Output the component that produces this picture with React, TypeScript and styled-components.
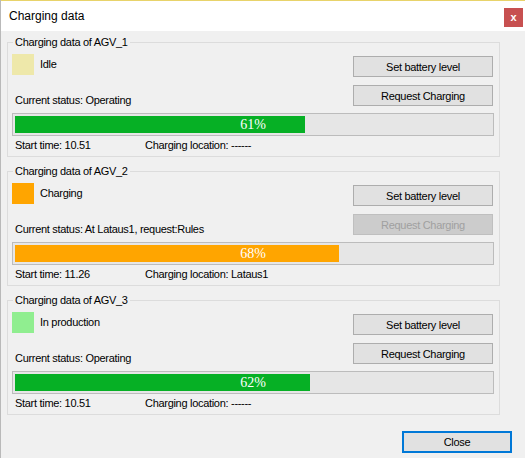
import React from "react";
import styled, { createGlobalStyle } from "styled-components";

const GlobalStyle = createGlobalStyle`
  html, body { margin: 0; padding: 0; background: #f0f0f0; }
  body { font-family: "Liberation Sans", Arial, sans-serif; }
  * { box-sizing: border-box; }
`;

const Window = styled.div`
  width: 525px;
  height: 458px;
  border-left: 1px solid #b9b9b9;
  background: #f0f0f0;
  display: flex;
  flex-direction: column;
  overflow: hidden;
`;

const TitleBar = styled.div`
  height: 31px;
  flex: none;
  border-top: 1px solid #e8d36a;
  background: #ffffff;
  display: flex;
  align-items: flex-start;
  justify-content: space-between;
  padding: 0 2px 0 8px;
`;

const Title = styled.span`
  font-size: 12px;
  line-height: 15px;
  color: #000;
  margin-top: 8px;
`;

const CloseX = styled.div`
  width: 19px;
  height: 19px;
  margin-top: 7px;
  background: #c75050;
  color: #fff;
  font: bold 11px "Liberation Sans", Arial, sans-serif;
  display: flex;
  align-items: center;
  justify-content: center;
  padding-bottom: 2px;
`;

const Body = styled.div`
  flex: 1;
  display: flex;
  flex-direction: column;
  padding: 5px 0 0 6px;
`;

const Groups = styled.div`
  display: flex;
  flex-direction: column;
  gap: 8px;
`;

const Group = styled.fieldset`
  width: 493px;
  min-width: 0;
  margin: 0;
  padding: 0 5px 4px 4px;
  border: 1px solid #dcdcdc;
  font-size: 11px;
  letter-spacing: -0.3px;
  color: #000;
`;

const Legend = styled.legend`
  padding: 0 2px;
  margin-left: 1px;
  line-height: 13px;
  font-size: 11px;
`;

const TopSection = styled.div`
  display: flex;
  justify-content: space-between;
  align-items: flex-start;
`;

const LeftCol = styled.div`
  display: flex;
  flex-direction: column;
  padding-top: 5px;
`;

const StateRow = styled.div`
  display: flex;
  align-items: center;
  gap: 6px;
  height: 21px;
`;

const Swatch = styled.div<{ $color: string }>`
  width: 22px;
  height: 21px;
  background: ${(p) => p.$color};
`;

const Text = styled.span`
  line-height: 13px;
  white-space: nowrap;
`;

const StatusText = styled(Text)`
  margin-top: 19px;
  padding-left: 3px;
`;

const RightCol = styled.div`
  display: flex;
  flex-direction: column;
  gap: 8px;
  padding-top: 7px;
  margin-right: 1px;
`;

const Button = styled.div<{ $disabled?: boolean }>`
  width: 140px;
  height: 21px;
  border: 1px solid ${(p) => (p.$disabled ? "#bfbfbf" : "#adadad")};
  background: ${(p) => (p.$disabled ? "#cccccc" : "#e1e1e1")};
  color: ${(p) => (p.$disabled ? "#a0a0a0" : "#000")};
  font-size: 11px;
  letter-spacing: -0.3px;
  display: flex;
  align-items: center;
  justify-content: center;
`;

const Bar = styled.div`
  margin-top: 6px;
  height: 23px;
  border: 1px solid #bcbcbc;
  background: #e6e6e6;
  padding: 2px;
  display: grid;
`;

const Fill = styled.div<{ $color: string }>`
  grid-area: 1 / 1;
  height: 17px;
  background: ${(p) => p.$color};
`;

const BarLabel = styled.span`
  grid-area: 1 / 1;
  align-self: center;
  justify-self: center;
  font-family: "Liberation Serif", "Times New Roman", serif;
  font-size: 14px;
  letter-spacing: 0;
  line-height: 17px;
  color: #ffffff;
`;

const InfoRow = styled.div`
  margin-top: 3px;
  display: grid;
  grid-template-columns: 130px 1fr;
  padding-left: 3px;
`;

const Footer = styled.div`
  display: flex;
  justify-content: flex-end;
  padding-right: 13px;
  margin-top: 16px;
`;

const CloseButton = styled.div`
  width: 110px;
  height: 22px;
  border: 2px solid #0078d7;
  background: #e1e1e1;
  font-size: 11px;
  letter-spacing: -0.3px;
  display: flex;
  align-items: center;
  justify-content: center;
`;

type Agv = {
  name: string;
  state: string;
  stateColor: string;
  status: string;
  percent: number;
  fill: string;
  start: string;
  location: string;
  requestDisabled?: boolean;
};

const agvs: Agv[] = [
  {
    name: "AGV_1",
    state: "Idle",
    stateColor: "#eee8aa",
    status: "Operating",
    percent: 61,
    fill: "#06b025",
    start: "10.51",
    location: "------",
  },
  {
    name: "AGV_2",
    state: "Charging",
    stateColor: "#ffa500",
    status: "At Lataus1, request:Rules",
    percent: 68,
    fill: "#ffa500",
    start: "11.26",
    location: "Lataus1",
    requestDisabled: true,
  },
  {
    name: "AGV_3",
    state: "In production",
    stateColor: "#90ee90",
    status: "Operating",
    percent: 62,
    fill: "#06b025",
    start: "10.51",
    location: "------",
  },
];

function AgvGroup({ agv }: { agv: Agv }) {
  return (
    <Group>
      <Legend>Charging data of {agv.name}</Legend>
      <TopSection>
        <LeftCol>
          <StateRow>
            <Swatch $color={agv.stateColor} />
            <Text>{agv.state}</Text>
          </StateRow>
          <StatusText>Current status: {agv.status}</StatusText>
        </LeftCol>
        <RightCol>
          <Button>Set battery level</Button>
          <Button $disabled={agv.requestDisabled}>Request Charging</Button>
        </RightCol>
      </TopSection>
      <Bar>
        <Fill $color={agv.fill} style={{ width: `${agv.percent}%` }} />
        <BarLabel>{agv.percent}%</BarLabel>
      </Bar>
      <InfoRow>
        <Text>Start time: {agv.start}</Text>
        <Text>Charging location: {agv.location}</Text>
      </InfoRow>
    </Group>
  );
}

export default function App() {
  return (
    <>
      <GlobalStyle />
      <Window>
        <TitleBar>
          <Title>Charging data</Title>
          <CloseX>x</CloseX>
        </TitleBar>
        <Body>
          <Groups>
            {agvs.map((a) => (
              <AgvGroup key={a.name} agv={a} />
            ))}
          </Groups>
          <Footer>
            <CloseButton>Close</CloseButton>
          </Footer>
        </Body>
      </Window>
    </>
  );
}
